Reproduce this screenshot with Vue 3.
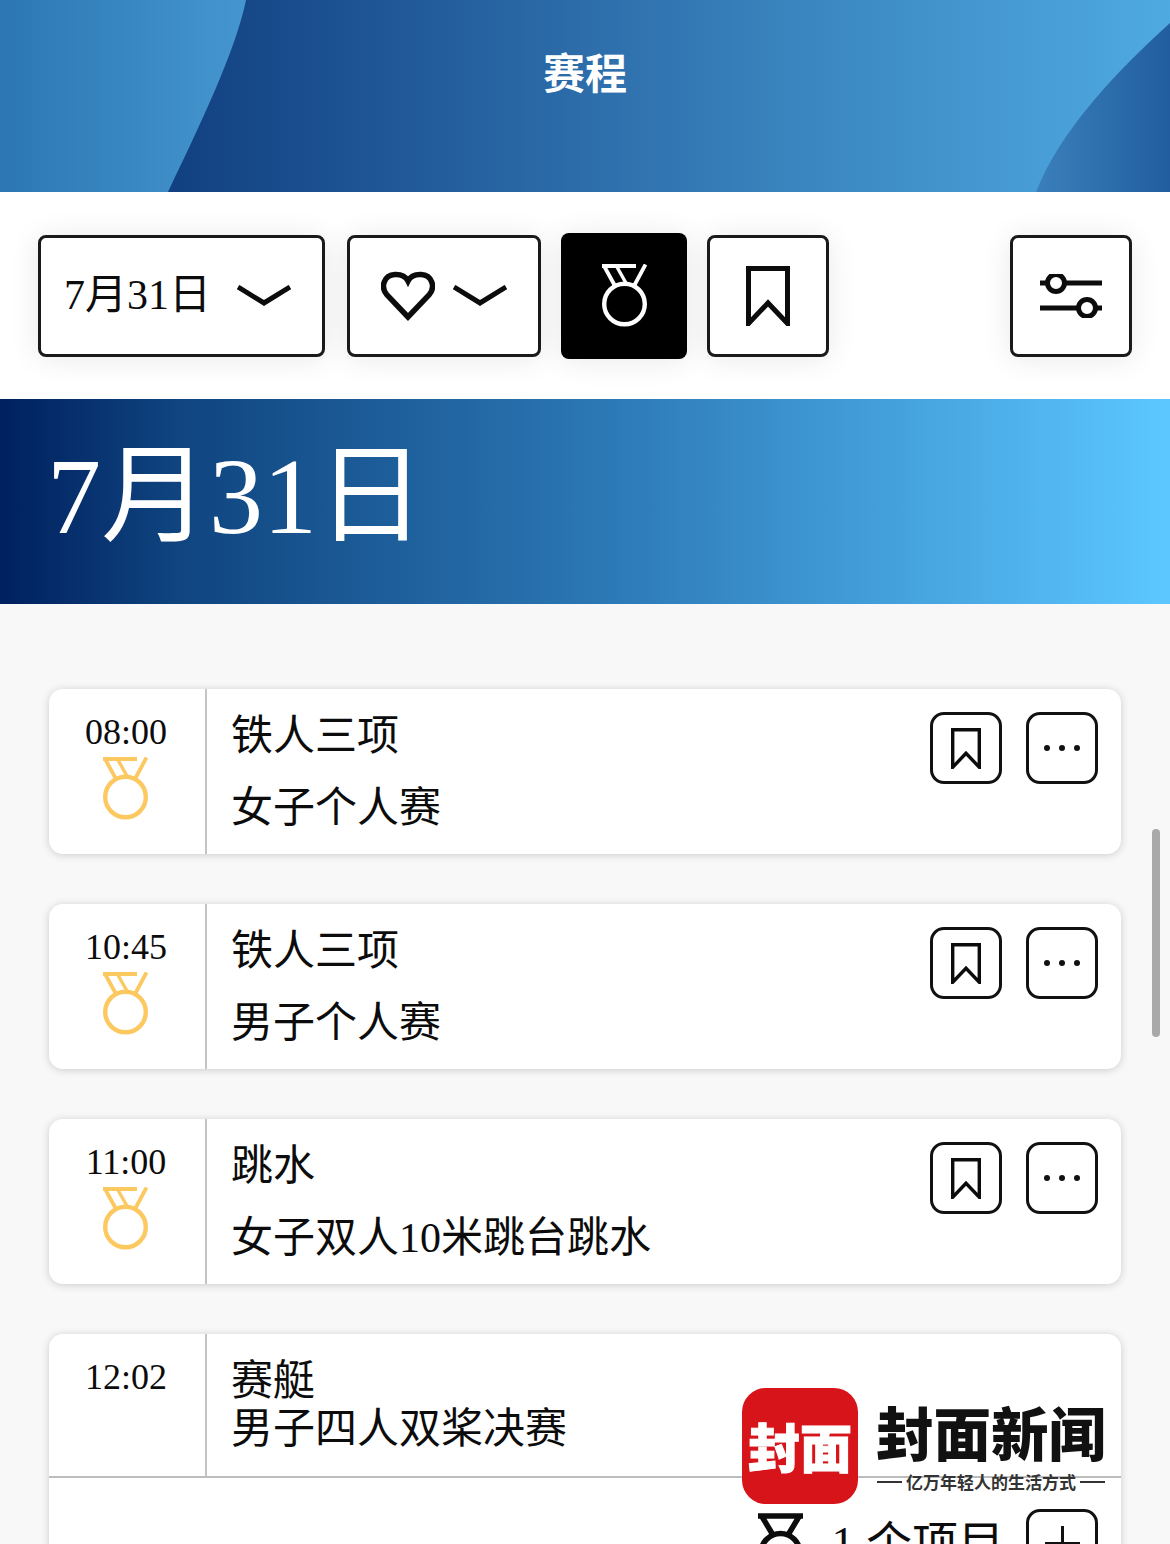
<script setup>
const events = [
  { time: '08:00', sport: '铁人三项', name: '女子个人赛' },
  { time: '10:45', sport: '铁人三项', name: '男子个人赛' },
  { time: '11:00', sport: '跳水', name: '女子双人10米跳台跳水' },
]
</script>

<template>
  <div class="page">
    <svg class="sprites" width="0" height="0" aria-hidden="true">
      <symbol id="medal" viewBox="0 0 45 63">
        <g fill="none" stroke="currentColor">
          <circle cx="22.5" cy="40" r="20.3" stroke-width="4.400" />
          <path d="M0 2H34M1.5 1 13 22M43.5 .5 32 22" stroke-width="3.800" />
          <path d="M15 3 24.5 20" stroke-width="3.400" />
        </g>
      </symbol>
      <symbol id="medal-bold" viewBox="0 0 45 63">
        <g fill="none" stroke="currentColor" stroke-width="5.500">
          <circle cx="22.5" cy="40" r="19.500" />
          <path d="M0 3H45M3 2 15 22M42 2 30 22" />
        </g>
      </symbol>
      <symbol id="bookmark" viewBox="0 0 44 60">
        <path d="M2.5 2.5H41.5V57.5L22 37 2.5 57.5Z" fill="none" stroke="currentColor" stroke-width="5" stroke-linejoin="miter" />
      </symbol>
      <symbol id="chevron" viewBox="0 0 54 21">
        <path d="M1 2 27 18 53 2" fill="none" stroke="currentColor" stroke-width="5" />
      </symbol>
    </svg>

    <header class="hero">
      <svg class="hero-art" viewBox="0 0 1170 192" preserveAspectRatio="none" aria-hidden="true">
        <defs>
          <linearGradient id="heroLeft" x1="0" x2="1" y1="0" y2="0">
            <stop offset="0" stop-color="#2c77b3" />
            <stop offset="1" stop-color="#4596d0" />
          </linearGradient>
          <linearGradient id="heroRight" x1="0" x2="1" y1="0" y2="0">
            <stop offset="0" stop-color="#3a80bb" />
            <stop offset="1" stop-color="#215d9f" />
          </linearGradient>
        </defs>
        <path d="M0 0H246C236 50 200 125 168 192H0Z" fill="url(#heroLeft)" />
        <path d="M1170 23C1118 70 1060 130 1036 192H1170Z" fill="url(#heroRight)" />
      </svg>
      <h1 class="hero-title">赛程</h1>
    </header>

    <section class="toolbar">
      <button class="tool tool-date">
        <span class="date-label">7月31日</span>
        <svg class="chev"><use href="#chevron" /></svg>
      </button>
      <button class="tool tool-fav">
        <svg class="heart" viewBox="0 0 54 50">
          <path d="M27 46 6 24C-1 16 3 4 14 3.500 20 3.300 25 6 27 10 29 6 34 3.300 40 3.500 51 4 55 16 48 24Z" fill="none" stroke="currentColor" stroke-width="5.500" />
        </svg>
        <svg class="chev"><use href="#chevron" /></svg>
      </button>
      <button class="tool tool-medal"><svg class="medal"><use href="#medal" /></svg></button>
      <button class="tool tool-square"><svg class="bookmark-lg"><use href="#bookmark" /></svg></button>
      <button class="tool tool-square tool-filter">
        <svg class="filter" viewBox="0 0 62 44">
          <g fill="none" stroke="currentColor" stroke-width="5">
            <path d="M0 9H62M0 34H62" />
            <circle cx="16" cy="9" r="8.500" fill="#fff" />
            <circle cx="47" cy="34" r="8.500" fill="#fff" />
          </g>
        </svg>
      </button>
    </section>

    <section class="banner"><h2>7月31日</h2></section>

    <main class="schedule">
      <article v-for="item in events" :key="item.time" class="card">
        <div class="row">
          <div class="time">
            <div class="clock">{{ item.time }}</div>
            <svg class="medal gold"><use href="#medal" /></svg>
          </div>
          <div class="info">
            <div>{{ item.sport }}</div>
            <div>{{ item.name }}</div>
          </div>
          <div class="actions">
            <button class="act"><svg class="bookmark-sm"><use href="#bookmark" /></svg></button>
            <button class="act"><span class="dots"><i></i><i></i><i></i></span></button>
          </div>
        </div>
      </article>

      <article class="card card-open">
        <div class="row row-open">
          <div class="time"><div class="clock">12:02</div></div>
          <div class="info info-tight">
            <div>赛艇</div>
            <div>男子四人双桨决赛</div>
          </div>
        </div>
        <div class="summary">
          <svg class="medal"><use href="#medal-bold" /></svg>
          <span class="count">1 个项目</span>
          <button class="act"><span class="plus"></span></button>
        </div>
      </article>
    </main>

    <div class="scrollbar"></div>

    <div class="logo">
      <div class="logo-mark">封面</div>
      <div class="logo-words">
        <div class="logo-name">封面新闻</div>
        <div class="logo-tag"><b></b><span>亿万年轻人的生活方式</span><b></b></div>
      </div>
    </div>
  </div>
</template>

<style>
html, body { margin: 0; overflow: hidden; }
</style>

<style scoped>
.page {
  position: relative;
  width: 1170px;
  height: 1544px;
  overflow: hidden;
  background: #f8f8f8;
  color: #0c0c0c;
  font-family: "Liberation Serif", "Noto Sans CJK SC", sans-serif;
}
.sprites { position: absolute; }
button {
  padding: 0;
  font: inherit;
  color: inherit;
  background: #fff;
  box-sizing: border-box;
  display: flex;
  align-items: center;
  justify-content: center;
}
svg { display: block; }

.hero {
  position: relative;
  height: 192px;
  box-sizing: border-box;
  padding-top: 44px;
  background: linear-gradient(90deg, #113f80 14%, #25609f 40%, #3a85bf 68%, #4faae2 100%);
}
.hero-art { position: absolute; inset: 0; width: 100%; height: 100%; }
.hero-title {
  position: relative;
  margin: 0;
  text-align: center;
  color: #fff;
  font: 700 42px/54px "Noto Sans CJK SC", sans-serif;
}

.toolbar {
  height: 207px;
  box-sizing: border-box;
  padding: 0 38px;
  background: #fff;
  display: flex;
  align-items: center;
}
.tool {
  height: 122px;
  border: 3px solid #1a1a1a;
  border-radius: 8px;
  box-shadow: 0 2px 30px rgba(0, 0, 0, .09);
}
.tool-date { width: 287px; font-size: 42px; justify-content: flex-start; padding-left: 23px; gap: 26px; }
.date-label { position: relative; top: -5px; }
.tool-fav { width: 194px; margin-left: 22px; gap: 18px; }
.tool-medal { width: 126px; height: 126px; margin-left: 20px; background: #000; border: 0; color: #fff; }
.tool-square { width: 122px; margin-left: 20px; }
.tool-filter { margin-left: auto; }
.chev { width: 54px; height: 21px; margin-top: -1px; }
.heart { width: 54px; height: 50px; }
.medal { width: 45px; height: 63px; flex: none; }
.bookmark-lg { width: 44px; height: 60px; }
.filter { width: 62px; height: 44px; }

.banner {
  height: 205px;
  box-sizing: border-box;
  padding: 0 0 10px 47px;
  display: flex;
  align-items: center;
  background: linear-gradient(90deg, #00205f 0%, #0f447f 15%, #2c79b6 52%, #5cc7ff 100%);
}
.banner h2 {
  margin: 0;
  color: #fff;
  font-size: 108px;
  font-weight: 400;
  line-height: 1;
}

.schedule {
  display: flex;
  flex-direction: column;
  gap: 50px;
  padding: 85px 49px 0;
}
.card {
  height: 165px;
  background: #fff;
  border-radius: 14px;
  box-shadow: 0 1px 9px rgba(0, 0, 0, .18);
}
.card-open { height: auto; flex: none; }
.row { display: flex; height: 165px; }
.row-open { height: 142px; border-bottom: 2px solid #bdbdbd; }
.time {
  width: 158px;
  flex: none;
  border-right: 2px solid #c4c4c4;
  padding: 19px 2px 0 0;
  box-sizing: border-box;
  display: flex;
  flex-direction: column;
  align-items: center;
}
.clock { font-size: 36px; line-height: 48px; height: 49px; }
.gold { color: #fcc860; margin-left: -1px; }
.info {
  flex: 1;
  padding: 11px 0 0 24px;
  font-size: 42px;
  line-height: 72px;
}
.info-tight { padding-top: 23px; line-height: 48px; }
.actions {
  display: flex;
  gap: 24px;
  padding: 23px 23px 0 0;
}
.act {
  width: 72px;
  height: 72px;
  border: 3px solid #111;
  border-radius: 14px;
}
.bookmark-sm { width: 30px; height: 41px; }
.dots { display: flex; gap: 9px; }
.dots i { width: 6px; height: 6px; border-radius: 50%; background: #111; }
.summary {
  display: flex;
  align-items: flex-start;
  padding: 31px 23px 0 0;
  justify-content: flex-end;
}
.summary .medal { margin-top: 4px; }
.count { font-size: 46px; line-height: 58px; margin: 6px 22px 0 29px; }
.plus { position: relative; top: -2px; width: 35px; height: 35px; }
.plus::before, .plus::after { content: ""; position: absolute; background: #111; }
.plus::before { left: 16px; top: 0; width: 3px; height: 35px; }
.plus::after { left: 0; top: 16px; width: 35px; height: 3px; }

.scrollbar {
  position: absolute;
  left: 1152px;
  top: 829px;
  width: 8px;
  height: 208px;
  border-radius: 4px;
  background: #a9a9a9;
}

.logo {
  position: absolute;
  left: 742px;
  top: 1388px;
  display: flex;
  gap: 18px;
}
.logo-mark {
  width: 116px;
  height: 116px;
  border-radius: 24px;
  background: #d7141a;
  color: #fff;
  font: 900 52px/116px "Noto Sans CJK SC", sans-serif;
  text-align: center;
  white-space: nowrap;
  -webkit-text-stroke: 1px #fff;
}
.logo-words { padding-top: 13px; width: 230px; }
.logo-name {
  font: 900 57.500px/60px "Noto Sans CJK SC", sans-serif;
  color: #111;
  white-space: nowrap;
}
.logo-tag {
  display: flex;
  align-items: center;
  gap: 4px;
  margin: 11px 0 0 1px;
  font: 700 17px/20px "Noto Sans CJK SC", sans-serif;
  color: #333;
  white-space: nowrap;
}
.logo-tag b { width: 25px; height: 2px; background: #333; flex: none; }
</style>
